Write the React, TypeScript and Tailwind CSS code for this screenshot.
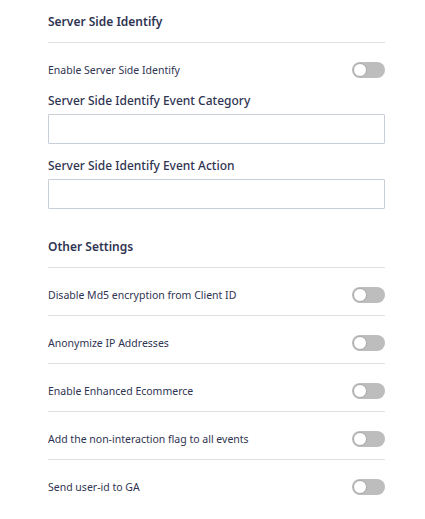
import React from 'react';

const Toggle: React.FC = () => (
  <div className="relative w-[33px] h-[16px] rounded-full bg-[#bdbdbd] shrink-0">
    <div className="absolute left-[1px] top-[1px] w-[14px] h-[14px] rounded-full bg-white border border-[#a8a8a8]"></div>
  </div>
);

const ToggleRow: React.FC<{ label: string; last?: boolean }> = ({ label, last }) => (
  <div className={`flex items-center justify-between pt-[19px] pb-[12px] ${last ? '' : 'border-b border-[#dcdfe3]'}`}>
    <span className="text-[10.5px] leading-[16px] text-[#2f3452]">{label}</span>
    <Toggle />
  </div>
);

const otherSettings = [
  'Disable Md5 encryption from Client ID',
  'Anonymize IP Addresses',
  'Enable Enhanced Ecommerce',
  'Add the non-interaction flag to all events',
  'Send user-id to GA',
];

export default function App() {
  return (
    <div className="min-h-screen w-[425px] bg-white pl-[48px] pr-[40px] pt-[13px] font-['Noto_Sans',sans-serif] text-[#2f3452]">
      {/* Server Side Identify */}
      <div className="border-b border-[#dcdfe3] pb-[11px]">
        <h2 className="text-[12px] leading-[18px] font-semibold">Server Side Identify</h2>
      </div>
      <div className="flex items-center justify-between pt-[19px]">
        <span className="text-[10.5px] leading-[16px]">Enable Server Side Identify</span>
        <Toggle />
      </div>

      <div className="mt-[14px]">
        <label className="block text-[12px] leading-[18px] font-medium mb-[4px]">Server Side Identify Event Category</label>
        <input className="block w-full h-[30px] border border-[#c8cfd8] rounded-[1px] outline-none" />
      </div>
      <div className="mt-[13px]">
        <label className="block text-[12px] leading-[18px] font-medium mb-[4px]">Server Side Identify Event Action</label>
        <input className="block w-full h-[30px] border border-[#c8cfd8] rounded-[1px] outline-none" />
      </div>

      {/* Other Settings */}
      <div className="mt-[29px] border-b border-[#dcdfe3] pb-[11px]">
        <h2 className="text-[12px] leading-[18px] font-semibold">Other Settings</h2>
      </div>
      {otherSettings.map((s, i) => (
        <ToggleRow key={s} label={s} last={i === otherSettings.length - 1} />
      ))}
    </div>
  );
}
